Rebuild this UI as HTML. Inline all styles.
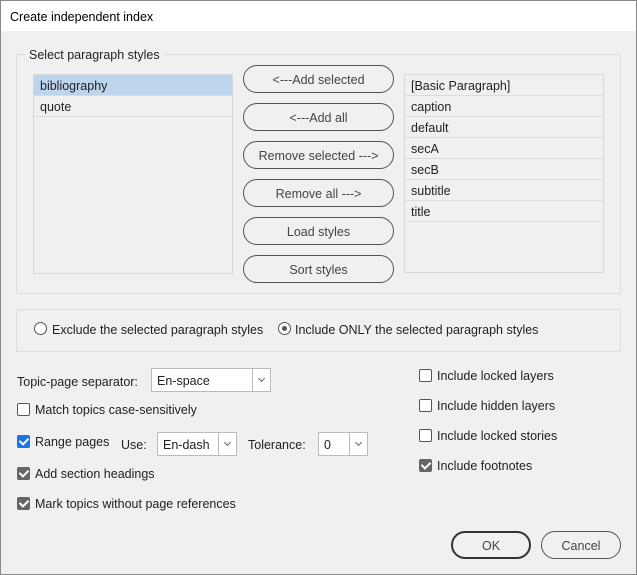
<!DOCTYPE html>
<html><head><style>
*{box-sizing:border-box;margin:0;padding:0}
body{width:637px;height:575px;background:#f0f0f0;font-family:"Liberation Sans",sans-serif;font-size:12.5px;color:#222;position:relative;overflow:hidden}
.win{position:absolute;left:0;top:0;width:637px;height:575px;border:1px solid #888}
.title{position:absolute;left:1px;top:1px;width:635px;height:30px;background:#fff;padding:9px 9px;font-size:12.5px;color:#000}
.abs{position:absolute}
.grp{position:absolute;border:1px solid #dcdcdc;border-radius:2px}
.list{position:absolute;background:#f0f0f0;border:1px solid #d8d8d8}
.row{height:21px;border-bottom:1px solid #dcdcdc;padding:4px 6px 2px;line-height:14px}
.sel{background:#bcd4ec}
.btn{position:absolute;width:151px;height:28px;border:1px solid #555;border-radius:14px;text-align:center;line-height:28px;color:#444}
.cb{position:absolute;width:13px;height:13px;border:1px solid #555;border-radius:2px;background:#fff}
.cb.on{background:#666;border-color:#666}
.cb.blue{background:#1a73e8;border-color:#1a73e8}
.cb.on::after,.cb.blue::after{content:"";position:absolute;left:3px;top:0px;width:4px;height:7px;border:solid #fff;border-width:0 2px 2px 0;transform:rotate(45deg)}
.lbl{position:absolute;line-height:14px}
.dd{position:absolute;height:24px;border:1px solid #bbb;background:#fff;padding:5px 5px 3px;line-height:14px}
.dd .ar{position:absolute;right:0;top:0;width:18px;height:22px;border-left:1px solid #bbb}
.dd .ar::after{content:"";position:absolute;left:6px;top:7px;width:4px;height:4px;border:solid #666;border-width:0 1px 1px 0;transform:rotate(45deg)}
</style></head><body>
<div class="win"></div>
<div class="title">Create independent index</div>

<div class="grp" style="left:16px;top:54px;width:605px;height:240px"></div>
<div class="abs" style="left:25px;top:48px;padding:0 4px;background:#f0f0f0;line-height:14px">Select paragraph styles</div>

<div class="list" style="left:33px;top:74px;width:200px;height:200px">
<div class="row sel">bibliography</div><div class="row">quote</div></div>

<div class="btn" style="left:243px;top:65px">&lt;---Add selected</div>
<div class="btn" style="left:243px;top:103px">&lt;---Add all</div>
<div class="btn" style="left:243px;top:141px">Remove selected ---&gt;</div>
<div class="btn" style="left:243px;top:179px">Remove all ---&gt;</div>
<div class="btn" style="left:243px;top:217px">Load styles</div>
<div class="btn" style="left:243px;top:255px">Sort styles</div>

<div class="list" style="left:404px;top:74px;width:200px;height:199px">
<div class="row">[Basic Paragraph]</div><div class="row">caption</div><div class="row">default</div><div class="row">secA</div><div class="row">secB</div><div class="row">subtitle</div><div class="row">title</div></div>

<div class="grp" style="left:16px;top:309px;width:605px;height:43px"></div>
<div class="abs" style="left:34px;top:322px;width:13px;height:13px;border:1px solid #555;border-radius:50%;background:#fff"></div>
<div class="lbl" style="left:52px;top:323px">Exclude the selected paragraph styles</div>
<div class="abs" style="left:278px;top:322px;width:13px;height:13px;border:1px solid #555;border-radius:50%;background:#fff"><div style="position:absolute;left:3px;top:3px;width:5px;height:5px;border-radius:50%;background:#555"></div></div>
<div class="lbl" style="left:295px;top:323px">Include ONLY the selected paragraph styles</div>

<div class="lbl" style="left:17px;top:375px">Topic-page separator:</div>
<div class="dd" style="left:151px;top:368px;width:120px">En-space<div class="ar"></div></div>

<div class="cb" style="left:17px;top:403px"></div><div class="lbl" style="left:35px;top:403px">Match topics case-sensitively</div>
<div class="cb blue" style="left:17px;top:435px"></div><div class="lbl" style="left:35px;top:435px">Range pages</div>
<div class="lbl" style="left:121px;top:438px">Use:</div>
<div class="dd" style="left:157px;top:432px;width:80px">En-dash<div class="ar"></div></div>
<div class="lbl" style="left:248px;top:438px">Tolerance:</div>
<div class="dd" style="left:318px;top:432px;width:50px">0<div class="ar"></div></div>
<div class="cb on" style="left:17px;top:467px"></div><div class="lbl" style="left:35px;top:467px">Add section headings</div>
<div class="cb on" style="left:17px;top:497px"></div><div class="lbl" style="left:35px;top:497px">Mark topics without page references</div>

<div class="cb" style="left:419px;top:369px"></div><div class="lbl" style="left:437px;top:369px">Include locked layers</div>
<div class="cb" style="left:419px;top:399px"></div><div class="lbl" style="left:437px;top:399px">Include hidden layers</div>
<div class="cb" style="left:419px;top:429px"></div><div class="lbl" style="left:437px;top:429px">Include locked stories</div>
<div class="cb on" style="left:419px;top:459px"></div><div class="lbl" style="left:437px;top:459px">Include footnotes</div>

<div class="btn" style="left:451px;top:531px;width:80px;border-width:2px;border-color:#333;line-height:26px">OK</div>
<div class="btn" style="left:541px;top:531px;width:80px">Cancel</div>
</body></html>
